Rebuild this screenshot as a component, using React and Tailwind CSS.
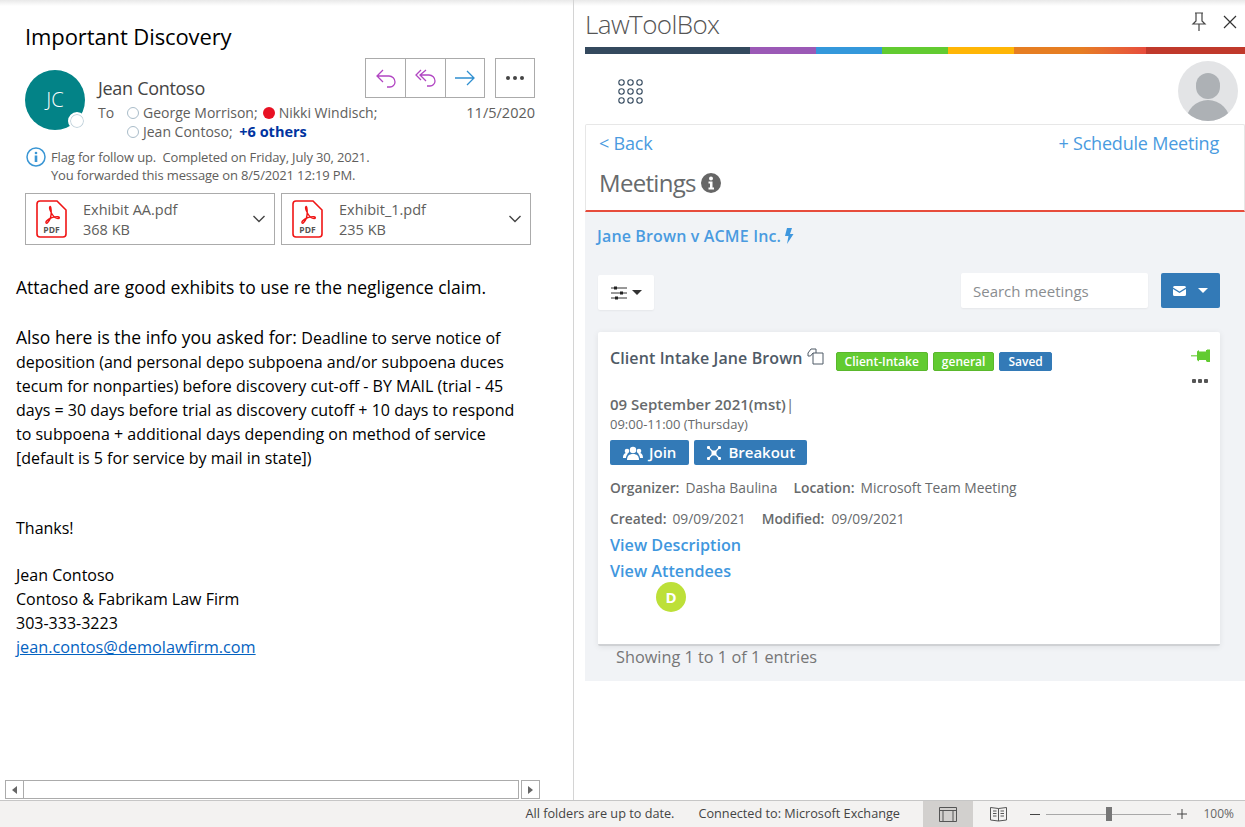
import React from "react";

const seg = "font-['Open_Sans',sans-serif]";

function Pdf() {
  return (
    <svg width="31" height="38" viewBox="0 0 31 38" className="shrink-0">
      <path d="M4 1h17l9 9v24a3 3 0 0 1-3 3H4a3 3 0 0 1-3-3V4a3 3 0 0 1 3-3z" fill="#fff" stroke="#f01414" strokeWidth="1.600" />
      <path d="M14 6.500c-1 1 .5 5 2 7.500 1.500 2.500 4 4.500 6 4.500 1.800 0 1.800-1.600 0-1.800-3.500-.3-9 1.500-11.500 4.300-1.500 1.800 0 2.800 1 1.800 2.500-2.600 3.700-7 3.700-10.300 0-4.500-.7-6.500-1.200-6z" fill="none" stroke="#f01414" strokeWidth="1.400" />
      <text x="15.500" y="32.500" textAnchor="middle" fontSize="8.500" fontWeight="700" fill="#555" fontFamily="'Open Sans',sans-serif">PDF</text>
    </svg>
  );
}

function Chevron() {
  return (
    <svg width="14" height="8" viewBox="0 0 14 8" className="shrink-0">
      <path d="M1.500 1l5.500 5.500L12.500 1" fill="none" stroke="#444" strokeWidth="1.400" />
    </svg>
  );
}

function Attachment({ name, size, last }) {
  return (
    <div className={`w-[250px] h-[52px] border border-[#ababab] flex items-center pl-[10px] pr-[8px] ${last ? "" : "mr-[6px]"}`}>
      <Pdf />
      <div className="ml-[16px] flex-1 text-[14.500px] leading-[20px] text-[#605e5c] mt-[1px]">
        <div>{name}</div>
        <div>{size}</div>
      </div>
      <Chevron />
    </div>
  );
}

function Presence({ red }) {
  return red ? (
    <span className="inline-block w-[12px] h-[12px] rounded-full bg-[#e81123] mr-[4px] align-[-1px]" />
  ) : (
    <span className="inline-block w-[12px] h-[12px] rounded-full border border-[#a9bcc9] mr-[4px] align-[-1px]" />
  );
}

function ActionButtons() {
  return (
    <div className="flex absolute top-[58px] right-[38px]">
      <div className="flex border border-[#ababab] h-[40px]">
        <div className="w-[40px] flex items-center justify-center border-r border-[#ababab]">
          <svg width="22" height="20" viewBox="0 0 22 20"><path d="M8 2L2 8l6 6M2 8h12a6 6 0 0 1 6 6v0a5 5 0 0 1-5 5h-3" fill="none" stroke="#b146c2" strokeWidth="1.300" /></svg>
        </div>
        <div className="w-[40px] flex items-center justify-center border-r border-[#ababab]">
          <svg width="22" height="20" viewBox="0 0 22 20"><path d="M6 2L1 7l5 5M11 2L5 7l6 6M5 7h9a6 6 0 0 1 6 6v0a5 5 0 0 1-5 5h-3" fill="none" stroke="#b146c2" strokeWidth="1.300" /></svg>
        </div>
        <div className="w-[38px] flex items-center justify-center">
          <svg width="22" height="16" viewBox="0 0 22 16"><path d="M13 1l7 7-7 7M1 8h19" fill="none" stroke="#2f8fd0" strokeWidth="1.300" /></svg>
        </div>
      </div>
      <div className="ml-[10px] w-[40px] h-[40px] border border-[#ababab] flex items-center justify-center gap-[3px]">
        <span className="w-[4px] h-[4px] rounded-full bg-[#444]" />
        <span className="w-[4px] h-[4px] rounded-full bg-[#444]" />
        <span className="w-[4px] h-[4px] rounded-full bg-[#444]" />
      </div>
    </div>
  );
}

function EmailPane() {
  return (
    <div className={`w-[574px] shrink-0 border-r border-[#d4d4d4] h-full relative flex flex-col ${seg}`}>
      <div className="pl-[25px] pt-[22px] text-[22px] leading-[28px] text-black tracking-[-0.1px]">Important Discovery</div>
      <ActionButtons />
      <div className="flex pl-[25px] mt-[20px]">
        <div className="relative w-[60px] h-[60px] rounded-full bg-[#038387] flex items-center justify-center text-white text-[20px] font-light">
          JC
          <span className="absolute right-[-1px] bottom-0 w-[18px] h-[18px] rounded-full bg-white border-[2px] border-white ring-1 ring-[#c2d3dc] ring-inset" />
        </div>
        <div className="ml-[13px] flex-1 pr-[38px]">
          <div className="text-[18px] leading-[24px] text-[#444] mt-[6px] tracking-[-0.3px]">Jean Contoso</div>
          <div className="flex text-[14px] leading-[19px] text-[#605e5c] mt-[3px]">
            <span className="w-[29px]">To</span>
            <div className="w-[270px]">
              <div><Presence />George Morrison;<span className="ml-[5px]" /><Presence red />Nikki Windisch;</div>
              <div><Presence />Jean Contoso; <span className="ml-[3px] text-[14.500px] text-[#0033a0] font-bold">+6 others</span></div>
            </div>
            <span className="ml-auto text-[14.500px]">11/5/2020</span>
          </div>
        </div>
      </div>
      <div className="flex pl-[25px] mt-[7px] text-[13px] leading-[18px] text-[#605e5c] tracking-[-0.15px]">
        <svg width="21" height="21" viewBox="0 0 21 21" className="mr-[5px] mt-[-2px] shrink-0">
          <circle cx="11" cy="11" r="9" fill="#fff" stroke="#3a96d4" strokeWidth="1.500" />
          <circle cx="11" cy="7" r="1.300" fill="#3a96d4" />
          <rect x="9.700" y="9.500" width="2.600" height="6.500" fill="#3a96d4" />
        </svg>
        <div>
          <div>Flag for follow up.&nbsp; Completed on Friday, July 30, 2021.</div>
          <div>You forwarded this message on 8/5/2021 12:19 PM.</div>
        </div>
      </div>
      <div className="flex pl-[25px] mt-[9px]">
        <Attachment name="Exhibit AA.pdf" size="368 KB" />
        <Attachment name="Exhibit_1.pdf" size="235 KB" last />
      </div>
      <div className="pl-[16px] mt-[29px] text-black w-[560px]">
        <div className="text-[17.500px] leading-[26px]">Attached are good exhibits to use re the negligence claim.</div>
        <div className="text-[16px] leading-[24px] mt-[25px]">
          <span className="text-[17.500px]">Also here is the info you asked for: </span>
          Deadline to serve notice of<br />
          deposition (and personal depo subpoena and/or subpoena duces<br />
          tecum for nonparties) before discovery cut-off - BY MAIL (trial - 45<br />
          days = 30 days before trial as discovery cutoff + 10 days to respond<br />
          to subpoena + additional days depending on method of service<br />
          [default is 5 for service by mail in state])
        </div>
        <div className="text-[16px] leading-[24px] mt-[46px]">Thanks!</div>
        <div className="text-[16px] leading-[24px] mt-[23px]">
          <div>Jean Contoso</div>
          <div>Contoso &amp; Fabrikam Law Firm</div>
          <div>303-333-3223</div>
          <div className="text-[16.250px] text-[#0563c1] underline">jean.contos@demolawfirm.com</div>
        </div>
      </div>
      <div className="mt-auto mb-[1px] ml-[5px] w-[535px] h-[19px] flex">
        <div className="w-[19px] h-full border border-[#ababab] flex items-center justify-center">
          <span className="w-0 h-0 border-y-[4px] border-y-transparent border-r-[5px] border-r-[#666]" />
        </div>
        <div className="flex-1 h-full border-y border-r border-[#ababab]" />
        <div className="ml-[2px] w-[19px] h-full border border-[#ababab] flex items-center justify-center">
          <span className="w-0 h-0 border-y-[4px] border-y-transparent border-l-[5px] border-l-[#666]" />
        </div>
      </div>
    </div>
  );
}

function ColorBar() {
  return (
    <div className="flex h-[7px] ml-[11px] mt-[6px] shrink-0">
      <div className="w-[165px] bg-[#34495e]" />
      <div className="w-[66px] bg-[#9b59b6]" />
      <div className="w-[66px] bg-[#3498db]" />
      <div className="w-[66px] bg-[#62cb31]" />
      <div className="w-[66px] bg-[#ffb606]" />
      <div className="w-[132px] bg-gradient-to-r from-[#e67e22] from-50% to-[#e74c3c]" />
      <div className="flex-1 bg-[#c0392b]" />
    </div>
  );
}

function GridIcon() {
  return (
    <svg width="25" height="25" viewBox="0 0 25 25">
      {[3.500, 12.500, 21.500].map((y) =>
        [3.500, 12.500, 21.500].map((x) => (
          <circle key={`${x}-${y}`} cx={x} cy={y} r="2.700" fill="none" stroke="#34495e" strokeWidth="1.100" />
        ))
      )}
    </svg>
  );
}

function Tag({ color, children, border }) {
  return (
    <span className={`h-[19px] px-[8px] rounded-[2px] text-white text-[12px] font-semibold leading-[17px] border ${color} ${border}`}>{children}</span>
  );
}

function BlueButton({ icon, children, padding }) {
  return (
    <div className={`h-[25px] flex items-center rounded-[2px] bg-[#337ab7] text-white text-[15px] font-semibold gap-[6px] ${padding}`}>
      {icon}
      {children}
    </div>
  );
}

function MeetingCard() {
  return (
    <div className="ml-[13px] mr-[25px] mt-[22px] h-[314px] shrink-0 bg-white rounded-[2px] border-b-[2px] border-[#cfd1d4] shadow-[0_1px_6px_rgba(0,0,0,0.08)] relative pl-[12px] pt-[15px] text-[#676a6c]">
      <div className="flex items-center h-[22px]">
        <span className="text-[16px] tracking-[0.1px] font-semibold text-[#4f5a66]">Client Intake Jane Brown</span>
        <svg width="17" height="17" viewBox="0 0 17 17" className="ml-[4px] mt-[-3px]">
          <path d="M6 5h10v11H6zM6 5l-2.500 3H1V5l3-4h5v4" fill="#fff" stroke="#4f5a66" strokeWidth="1" />
        </svg>
        <div className="flex gap-[5px] ml-[12px] mt-[7px]">
          <Tag color="bg-[#62cb31]" border="border-[#5ab82c]">Client-Intake</Tag>
          <Tag color="bg-[#62cb31]" border="border-[#5ab82c]">general</Tag>
          <Tag color="bg-[#337ab7]" border="border-[#337ab7]">Saved</Tag>
        </div>
      </div>
      <svg width="19" height="14" viewBox="0 0 19 14" className="absolute top-[17px] right-[10px]">
        <path d="M0 6h6v1.500H0z" fill="#8fd86a" />
        <path d="M6 2.500l2-1.500v1.500h7V1h1v-.500h3V13h-3v-.500h-1V11h-7v1.500l-2-1.500z" fill="#62cb31" />
      </svg>
      <div className="absolute top-[47px] right-[12px] flex gap-[2px]">
        <span className="w-[4px] h-[4px] rounded-[1px] bg-[#555]" />
        <span className="w-[4px] h-[4px] rounded-[1px] bg-[#555]" />
        <span className="w-[4px] h-[4px] rounded-[1px] bg-[#555]" />
      </div>
      <div className="mt-[25px] text-[15px] leading-[20px] font-semibold text-[#676a6c]">09 September 2021(mst)<span className="font-normal">|</span></div>
      <div className="text-[13px] leading-[17px] font-medium text-[#676a6c] mt-[2px]">09:00-11:00 (Thursday)</div>
      <div className="flex gap-[5px] mt-[7px]">
        <BlueButton padding="px-[13px]" icon={
          <svg width="20" height="14" viewBox="0 0 20 14"><g fill="#fff"><circle cx="10" cy="4" r="3.200" /><path d="M4 14c0-4 2-6 6-6s6 2 6 6z" /><circle cx="4" cy="5" r="2.300" /><circle cx="16" cy="5" r="2.300" /><path d="M0 12c0-3 1-5 4-5l1 .5C3.500 9 3 11 3 12zM20 12c0-3-1-5-4-5l-1 .5c1.500 1.500 2 3.500 2 4.500z" /></g></svg>
        }>Join</BlueButton>
        <BlueButton padding="px-[12px]" icon={
          <svg width="16" height="16" viewBox="0 0 16 16"><g fill="#fff"><rect x="1" y="1" width="3" height="3" rx="1" /><rect x="12" y="1" width="3" height="3" rx="1" /><rect x="1" y="12" width="3" height="3" rx="1" /><rect x="12" y="12" width="3" height="3" rx="1" /><rect x="5.500" y="5.500" width="5" height="5" rx="1" /></g><path d="M3 3l10 10M13 3L3 13" stroke="#fff" strokeWidth="1.200" /></svg>
        }>Breakout</BlueButton>
      </div>
      <div className="mt-[14px] text-[13.800px] leading-[18px] flex">
        <b className="font-semibold">Organizer:</b><span className="ml-[6px]">Dasha Baulina</span>
        <b className="font-semibold ml-[16px]">Location:</b><span className="ml-[6px]">Microsoft Team Meeting</span>
      </div>
      <div className="mt-[13px] text-[13.800px] leading-[18px] flex">
        <b className="font-semibold">Created:</b><span className="ml-[6px]">09/09/2021</span>
        <b className="font-semibold ml-[16px]">Modified:</b><span className="ml-[7px]">09/09/2021</span>
      </div>
      <div className="mt-[4px] text-[16.200px] leading-[26px] font-semibold text-[#3f97de]">View Description</div>
      <div className="text-[16.200px] leading-[26px] font-semibold text-[#3f97de]">View Attendees</div>
      <div className="ml-[46px] mt-[-2px] w-[30px] h-[30px] rounded-full bg-[#bde038] text-white text-[15px] font-bold flex items-center justify-center">D</div>
    </div>
  );
}

function SidePane() {
  return (
    <div className={`flex-1 h-full flex flex-col ${seg}`}>
      <div className="flex items-center h-[34px] mt-[7px] pl-[11px] pr-[8px] shrink-0">
        <span className="text-[26px] font-light text-[#555] tracking-[-0.6px]">LawToolBox</span>
        <svg width="16" height="20" viewBox="0 0 16 20" className="ml-auto mr-[16px] mt-[-4px]">
          <path d="M4 1h8M5 1v8l-3 3h12l-3-3V1M8 12v7" fill="none" stroke="#444" strokeWidth="1.200" />
        </svg>
        <svg width="14" height="14" viewBox="0 0 14 14" className="mt-[-4px]">
          <path d="M1 1l12 12M13 1L1 13" stroke="#333" strokeWidth="1.200" />
        </svg>
      </div>
      <ColorBar />
      <div className="flex items-center h-[70px] ml-[44px] pr-[7px] pt-[4px] shrink-0">
        <GridIcon />
        <div className="ml-auto w-[60px] h-[60px] rounded-full bg-[#e3e4e6] relative overflow-hidden">
          <span className="absolute left-[18px] top-[12px] w-[24px] h-[26px] rounded-full bg-[#adb1b5]" />
          <span className="absolute left-[8px] top-[39px] w-[44px] h-[30px] rounded-t-[24px] bg-[#adb1b5]" />
        </div>
      </div>
      <div className="ml-[11px] h-[88px] shrink-0 border border-[#e7e7e7] border-b-[2px] border-b-[#e74c3c] bg-white rounded-t-[2px] px-[13px] pt-[5px] box-border">
        <div className="flex justify-between pr-[12px] text-[18px] leading-[26px] text-[#4a9be0] tracking-[-0.2px]">
          <span>&lt; Back</span>
          <span>+ Schedule Meeting</span>
        </div>
        <div className="flex items-center gap-[5px] mt-[11px] text-[24px] leading-[32px] text-[#676a6c] tracking-[-0.7px]">
          Meetings
          <svg width="20" height="20" viewBox="0 0 20 20"><circle cx="10" cy="10" r="10" fill="#666" /><circle cx="10" cy="5.500" r="2" fill="#fff" /><path d="M7.500 8.500h4v6h1.500v2H7.500v-2H9v-4H7.500z" fill="#fff" /></svg>
        </div>
      </div>
      <div className="ml-[11px] h-[469px] shrink-0 bg-[#f1f3f6] flex flex-col">
        <div className="flex items-center pl-[12px] mt-[12px] text-[16px] tracking-[0.15px] leading-[24px] font-semibold text-[#4a9be0]">
          Jane Brown v ACME Inc.
          <svg width="10" height="16" viewBox="0 0 10 16" className="ml-[3px]"><path d="M3 0h5L6 6h3.500L3 16l1.500-8H1z" fill="#3f97de" /></svg>
        </div>
        <div className="flex items-start pl-[13px] pr-[25px] mt-[25px] h-[37px] shrink-0">
          <div className="mt-[2px] w-[56px] h-[35px] bg-white rounded-[2px] flex items-center justify-center gap-[5px] shadow-[0_1px_2px_rgba(0,0,0,0.05)]">
            <svg width="16" height="14" viewBox="0 0 16 14"><path d="M0 2h16M0 7h16M0 12h16" stroke="#333" strokeWidth="1" /><path d="M3 .500h3v3H3zM9 5.500h3v3H9zM4 10.500h3v3H4z" fill="#222" /></svg>
            <span className="w-0 h-0 border-x-[5px] border-x-transparent border-t-[5px] border-t-[#333]" />
          </div>
          <div className="ml-auto w-[187px] h-[35px] bg-white rounded-[2px] flex items-center pl-[12px] pt-[2px] text-[15px] text-[#8a8d90] shadow-[0_1px_2px_rgba(0,0,0,0.05)]">Search meetings</div>
          <div className="ml-[13px] w-[59px] h-[35px] bg-[#337ab7] rounded-[2px] flex items-center justify-center gap-[12px]">
            <svg width="13" height="10" viewBox="0 0 13 10"><path d="M0 1.500A1.500 1.500 0 0 1 1.500 0h10A1.500 1.500 0 0 1 13 1.500L6.500 5.500zM0 3l6.500 4L13 3v5.500A1.500 1.500 0 0 1 11.500 10h-10A1.500 1.500 0 0 1 0 8.500z" fill="#fff" /></svg>
            <span className="w-0 h-0 border-x-[5px] border-x-transparent border-t-[5px] border-t-white" />
          </div>
        </div>
        <MeetingCard />
        <div className="pl-[31px] text-[16.300px] leading-[22px] text-[#767676]">Showing 1 to 1 of 1 entries</div>
      </div>
      <div className="flex-1" />
    </div>
  );
}

function StatusBar() {
  return (
    <div className={`h-[27px] shrink-0 border-t border-[#c6c6c6] bg-[#f3f2f1] flex items-center justify-end text-[12.700px] text-[#444] ${seg}`}>
      <span className="mr-[24px]">All folders are up to date.</span>
      <span className="mr-[23px]">Connected to: Microsoft Exchange</span>
      <div className="w-[50px] h-full bg-[#d2d0ce] flex items-center justify-center">
        <svg width="18" height="15" viewBox="0 0 18 15"><path d="M.500.500h17v14H.500zM.500 3.500h17M4 3.500v11M14 3.500v11" fill="none" stroke="#555" strokeWidth="1" /></svg>
      </div>
      <div className="w-[50px] flex items-center justify-center">
        <svg width="17" height="17" viewBox="0 0 17 17"><path d="M.500 1.500L8.500 2.500l8-1V14l-8 1-8-1zM8.500 2.500V15M3 5h3.500M3 7.500h3.500M3 10h3.500M10.500 5H14M10.500 7.500H14M10.500 10H14" fill="none" stroke="#555" strokeWidth="1" /></svg>
      </div>
      <span className="w-[10px] h-[1px] bg-[#444] ml-[7px]" />
      <div className="relative w-[125px] h-[1px] bg-[#a8a8a8] mx-[6px]">
        <span className="absolute left-[60px] top-[-7px] w-[6px] h-[14px] bg-[#777]" />
      </div>
      <svg width="10" height="10" viewBox="0 0 10 10"><path d="M0 5h10M5 0v10" stroke="#444" strokeWidth="1" /></svg>
      <span className="w-[47px] text-right mr-[11px] text-[#666] text-[12px]">100%</span>
    </div>
  );
}

export default function App() {
  return (
    <div className="w-[1245px] h-[827px] bg-white flex flex-col overflow-hidden relative">
      <div className="absolute inset-x-0 top-0 h-[6px] bg-gradient-to-b from-[#e9e9e9] to-white" />
      <div className="flex flex-1 min-h-0">
        <EmailPane />
        <SidePane />
      </div>
      <StatusBar />
    </div>
  );
}
